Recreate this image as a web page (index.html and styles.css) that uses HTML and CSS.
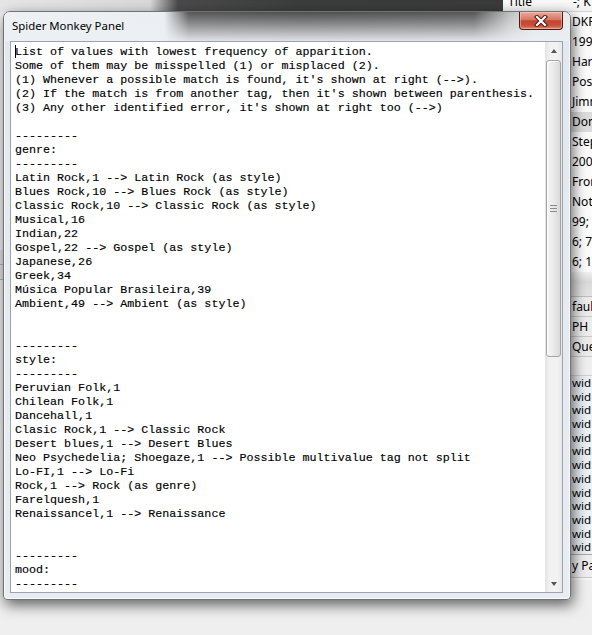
FILE: index.html
```html
<!DOCTYPE html>
<html>
<head>
<meta charset="utf-8">
<title>Spider Monkey Panel</title>
<link rel="stylesheet" href="styles.css">
</head>
<body>
<div class="desk">
  <div class="topstrip"></div>
  <div class="leftbits"><span class="lb1"></span><span class="lb2"></span></div>

  <div class="bgpanel">
    <div class="bghead"><span class="hc1">Title</span><span class="hc2">-; K</span></div>
    <div class="bgcol">
      <div class="r">DKR</div>
      <div class="r">199</div>
      <div class="r">Har</div>
      <div class="r">Pos</div>
      <div class="r">Jimm</div>
      <div class="r sel">Don</div>
      <div class="r">Step</div>
      <div class="r">200</div>
      <div class="r">From</div>
      <div class="r">Not</div>
      <div class="r">99;</div>
      <div class="r">6; 7</div>
      <div class="r">6; 1</div>
      <div class="sep"></div>
      <div class="r2">faul</div>
      <div class="r2">PH</div>
      <div class="r2">Quer</div>
      <div class="sep2"></div>
      <div class="r3">wid</div>
      <div class="r3">wid</div>
      <div class="r3">wid</div>
      <div class="r3">wid</div>
      <div class="r3">wid</div>
      <div class="r3">wid</div>
      <div class="r3">wid</div>
      <div class="r3">wid</div>
      <div class="r3">wid</div>
      <div class="r3">wid</div>
      <div class="r3">wid</div>
      <div class="r3">wid</div>
      <div class="r3">wid</div>
      <div class="r4">y Pa</div>
    </div>
  </div>

  <div class="window">
    <div class="titlebar">
      <span class="title">Spider Monkey Panel</span>
      <div class="close">
        <svg width="14" height="12" viewBox="0 0 14 12">
          <path d="M3 2 L11 10 M11 2 L3 10" stroke="#4a1a12" stroke-width="4.2" stroke-linecap="square" fill="none"/>
          <path d="M3 2 L11 10 M11 2 L3 10" stroke="#ffffff" stroke-width="2.2" stroke-linecap="square" fill="none"/>
        </svg>
      </div>
    </div>
    <div class="client">
      <div class="editbox">
<pre class="text"><span class="caret"></span>List of values with lowest frequency of apparition.
Some of them may be misspelled (1) or misplaced (2).
(1) Whenever a possible match is found, it's shown at right (--&gt;).
(2) If the match is from another tag, then it's shown between parenthesis.
(3) Any other identified error, it's shown at right too (--&gt;)

---------
genre:
---------
Latin Rock,1 --&gt; Latin Rock (as style)
Blues Rock,10 --&gt; Blues Rock (as style)
Classic Rock,10 --&gt; Classic Rock (as style)
Musical,16
Indian,22
Gospel,22 --&gt; Gospel (as style)
Japanese,26
Greek,34
Música Popular Brasileira,39
Ambient,49 --&gt; Ambient (as style)


---------
style:
---------
Peruvian Folk,1
Chilean Folk,1
Dancehall,1
Clasic Rock,1 --&gt; Classic Rock
Desert blues,1 --&gt; Desert Blues
Neo Psychedelia; Shoegaze,1 --&gt; Possible multivalue tag not split
Lo-FI,1 --&gt; Lo-Fi
Rock,1 --&gt; Rock (as genre)
Farelquesh,1
Renaissancel,1 --&gt; Renaissance


---------
mood:
---------</pre>
        <div class="vscroll">
          <div class="arrow up"><span class="tri-up"></span></div>
          <div class="thumb"><span class="grip"></span></div>
          <div class="track"></div>
          <div class="arrow down"><span class="tri-down"></span></div>
        </div>
      </div>
    </div>
  </div>
</div>
</body>
</html>
```

FILE: styles.css
```css
html, body {
  margin: 0;
  padding: 0;
}
body {
  width: 592px;
  height: 635px;
  overflow: hidden;
  background: #f0f0f0;
  font-family: "Noto Sans", "Liberation Sans", sans-serif;
}
.desk {
  position: relative;
  width: 592px;
  height: 635px;
  background: #efefef;
}
.topstrip {
  height: 12px;
  background: linear-gradient(to right, #e6e6e6 0, #d9d9d9 150px, #4a4a4a 178px, #3c3c3c 300px, #3a3a3a 100%);
}
.leftbits {
  position: absolute;
  left: 0;
  top: 250px;
  width: 3px;
  height: 40px;
}
.lb1, .lb2 {
  display: block;
  height: 14px;
  border-bottom: 1px solid #b5b5b5;
  background: #e2e2e2;
}

/* background application list */
.bgpanel {
  position: absolute;
  left: 503px;
  top: -7px;
  width: 89px;
  height: 587px;
  background: #f7f7f7;
  font-size: 12px;
  color: #000;
}
.bghead {
  display: flex;
  height: 18px;
  line-height: 18px;
  background: linear-gradient(#ffffff, #f2f2f2);
  border-bottom: 1px solid #d5d5d5;
}
.hc1 {
  width: 67px;
  padding-left: 5px;
  box-sizing: border-box;
}
.hc2 {
  padding-left: 3px;
}
.bgcol {
  margin-left: 67px;
}
.r {
  height: 20px;
  line-height: 20px;
  padding-left: 2px;
  white-space: nowrap;
  overflow: hidden;
  background: #fbfbfb;
}
.r.sel {
  background: #dcdcdc;
}
.sep {
  height: 24px;
  background: linear-gradient(#f0f0f0, #d9d9d9 40%, #e3e3e3);
  border-bottom: 1px solid #bdbdbd;
}
.r2 {
  height: 19px;
  line-height: 19px;
  padding-left: 2px;
  background: #ececec;
  border-bottom: 1px solid #c9c9c9;
  white-space: nowrap;
}
.sep2 {
  height: 18px;
  background: #efefef;
  border-bottom: 1px solid #d0d0d0;
}
.r3 {
  height: 13.7px;
  line-height: 13.7px;
  font-size: 11.5px;
  padding-left: 2px;
  background: linear-gradient(to right, #dfe6ee, #eef2f6);
  white-space: nowrap;
  overflow: hidden;
}
.r4 {
  height: 22px;
  line-height: 22px;
  padding-left: 2px;
  background: #eeeeee;
  border-top: 1px solid #a9a9a9;
  border-bottom: 1px solid #c8c8c8;
  white-space: nowrap;
}

/* dialog window */
.window {
  position: absolute;
  left: 3px;
  top: 11px;
  width: 568px;
  height: 589px;
  box-sizing: border-box;
  border: 1px solid #6e7378;
  border-radius: 7px 7px 4px 4px;
  background: linear-gradient(to bottom, #e3e8ee, #e9edf1);
  box-shadow: 2px 5px 14px rgba(0, 0, 0, 0.6), inset 0 0 0 1px rgba(255, 255, 255, 0.7);
  display: flex;
  flex-direction: column;
  overflow: hidden;
}
.titlebar {
  position: relative;
  height: 29px;
  flex: none;
  background:
    linear-gradient(to bottom, rgba(236, 239, 243, 0) 0%, rgba(236, 239, 243, 0.35) 40%, rgba(236, 239, 243, 0.92) 100%),
    linear-gradient(to right, #eef1f4 0, #eceff2 160px, #565656 185px, #4e4e4e 300px, #555555 470px, #bdbdbd 505px, #e4e6e8 530px, #e8eaec 100%);
}
.title {
  display: block;
  padding: 5px 0 0 8px;
  font-size: 11.4px;
  line-height: 18px;
  color: #000;
}
.close {
  position: absolute;
  left: 515px;
  top: 0;
  width: 44px;
  height: 18px;
  box-sizing: border-box;
  border: 1px solid #4b1a14;
  border-top: none;
  border-radius: 0 0 4px 4px;
  background: linear-gradient(to bottom, #e9ab9d 0%, #d77665 45%, #c24430 52%, #c9503c 80%, #e08a6c 100%);
  box-shadow: inset 0 0 0 1px rgba(255, 220, 210, 0.45);
  display: flex;
  align-items: center;
  justify-content: center;
}
.client {
  flex: 1;
  display: flex;
  padding: 0 7px 6px 6px;
  min-height: 0;
}
.editbox {
  flex: 1;
  display: flex;
  border: 1px solid #98a4b2;
  background: #fff;
  min-width: 0;
}
.text {
  flex: 1;
  margin: 0;
  padding: 3px 0 0 4px;
  overflow: hidden;
  font-family: "Liberation Mono", "Courier New", monospace;
  font-size: 11.7px;
  line-height: 14px;
  color: #000;
  white-space: pre;
  -webkit-text-stroke: 0.15px #000;
}
.caret {
  display: inline-block;
  width: 0;
  height: 13px;
  border-left: 1px solid #000;
  vertical-align: -3px;
  margin-right: -1px;
}
.vscroll {
  width: 17px;
  flex: none;
  display: flex;
  flex-direction: column;
  background: linear-gradient(to right, #e4e4e4, #f2f2f2 30%, #f2f2f2 70%, #e8e8e8);
}
.arrow {
  height: 17px;
  display: flex;
  align-items: center;
  justify-content: center;
  flex: none;
}
.tri-up {
  width: 0;
  height: 0;
  border-left: 3.5px solid transparent;
  border-right: 3.5px solid transparent;
  border-bottom: 4px solid #555;
}
.tri-down {
  width: 0;
  height: 0;
  border-left: 3.5px solid transparent;
  border-right: 3.5px solid transparent;
  border-top: 4px solid #555;
}
.thumb {
  height: 297px;
  margin: 1px 1px 0 1px;
  flex: none;
  box-sizing: border-box;
  border: 1px solid #a4a4a4;
  border-radius: 3px;
  background: linear-gradient(to right, #f6f6f6, #eaeaea 50%, #d9d9d9);
  box-shadow: inset 1px 1px 0 #ffffff;
  display: flex;
  align-items: center;
  justify-content: center;
}
.grip {
  width: 7px;
  height: 5px;
  border-top: 1px solid #8a8a8a;
  border-bottom: 1px solid #8a8a8a;
  background: linear-gradient(transparent 2px, #8a8a8a 2px, #8a8a8a 3px, transparent 3px);
}
.track {
  flex: 1;
}
```
